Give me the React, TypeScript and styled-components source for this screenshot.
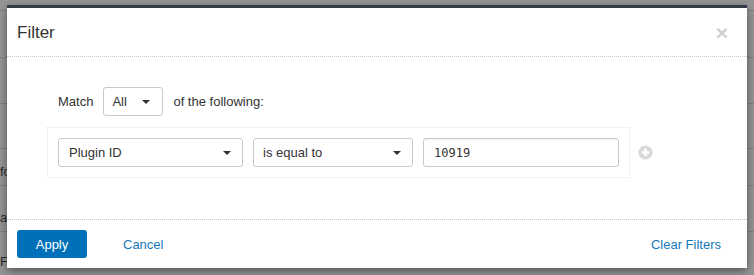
import styled, { createGlobalStyle } from "styled-components";

const GlobalStyle = createGlobalStyle`
  html, body {
    margin: 0;
    padding: 0;
  }
  body {
    font-family: "Liberation Sans", Arial, sans-serif;
    font-size: 13px;
    color: #333;
  }
`;

const Page = styled.div`
  position: relative;
  width: 754px;
  height: 275px;
  overflow: hidden;
  background: #969696;
`;

const BackTable = styled.div`
  display: flex;
  flex-direction: column;
`;

const BackRow = styled.div<{ $h: number; $pad: number }>`
  box-sizing: border-box;
  height: ${(p) => p.$h}px;
  border-bottom: 1px solid #818181;
  padding-top: ${(p) => p.$pad}px;
  font-size: 13px;
  color: #2a2a2a;
  white-space: nowrap;
`;

const Modal = styled.div`
  position: absolute;
  left: 7px;
  top: 5px;
  width: 740px;
  height: 263px;
  box-sizing: border-box;
  background: #fff;
  border-top: 3px solid #303c48;
  box-shadow: 0 3px 9px rgba(0, 0, 0, 0.45);
  display: flex;
  flex-direction: column;
`;

const Header = styled.div`
  box-sizing: border-box;
  height: 49px;
  border-bottom: 1px dotted #c8c8c8;
  display: flex;
  align-items: center;
  justify-content: space-between;
  padding: 0 19px 0 10px;
`;

const Title = styled.h4`
  margin: 0;
  font-size: 17px;
  font-weight: normal;
  color: #333;
  line-height: 1;
  padding-top: 1px;
`;

const Close = styled.span`
  font-size: 21px;
  font-weight: bold;
  line-height: 1;
  color: #cfcfcf;
  cursor: pointer;
`;

const Body = styled.div`
  flex: 1;
  box-sizing: border-box;
  padding: 30px 0 0 40px;
`;

const MatchRow = styled.div`
  display: flex;
  align-items: center;
  gap: 10px;
  height: 29px;
  margin-left: 11px;
`;

const Select = styled.div<{ $w: number; $padLeft?: number; $padRight?: number }>`
  box-sizing: border-box;
  width: ${(p) => p.$w}px;
  height: 29px;
  border: 1px solid #cacaca;
  border-radius: 3px;
  background: #fff;
  display: flex;
  align-items: center;
  justify-content: space-between;
  padding: 0 ${(p) => p.$padRight ?? 11}px 0 ${(p) => p.$padLeft ?? 9}px;
  color: #333;
`;

const Caret = styled.span`
  width: 0;
  height: 0;
  border-left: 4px solid transparent;
  border-right: 4px solid transparent;
  border-top: 4px solid #333;
  margin-top: 1px;
`;

const ConditionRow = styled.div`
  display: flex;
  align-items: center;
  gap: 8px;
  margin-top: 11px;
`;

const ConditionBox = styled.div`
  box-sizing: border-box;
  width: 583px;
  border: 1px dotted #e2e2e2;
  padding: 10px;
  display: flex;
  gap: 10px;
`;

const ValueInput = styled.input`
  box-sizing: border-box;
  width: 196px;
  height: 29px;
  border: 1px solid #cacaca;
  border-radius: 3px;
  padding: 0 10px;
  font-family: "DejaVu Sans Mono", "Liberation Mono", monospace;
  font-size: 12px;
  color: #333;
  box-shadow: inset 0 1px 1px rgba(0, 0, 0, 0.06);
  outline: none;
`;

const PlusIcon = styled.svg`
  width: 15px;
  height: 15px;
  display: block;
`;

const Footer = styled.div`
  box-sizing: border-box;
  height: 49px;
  border-top: 1px dotted #c8c8c8;
  display: flex;
  align-items: center;
  padding: 0 26px 0 10px;
`;

const PrimaryButton = styled.button`
  box-sizing: border-box;
  width: 70px;
  height: 28px;
  border: 0;
  border-radius: 3px;
  background: #0070ba;
  color: #fff;
  font-family: inherit;
  font-size: 13px;
  cursor: pointer;
`;

const LinkButton = styled.a<{ $push?: boolean }>`
  color: #1677b9;
  font-size: 13px;
  text-decoration: none;
  cursor: pointer;
  margin-left: ${(p) => (p.$push ? "auto" : "36px")};
`;

// rows of the page behind the dialog, only their left edges peek out
const backRows = [
  { h: 11, pad: 0, text: "" },
  { h: 47, pad: 0, text: "" },
  { h: 46, pad: 0, text: "" },
  { h: 45, pad: 0, text: "" },
  { h: 37, pad: 15, text: "fo" },
  { h: 46, pad: 24, text: "ac" },
  { h: 44, pad: 22, text: "F" },
];

export default function App() {
  return (
    <>
      <GlobalStyle />
      <Page>
        <BackTable>
          {backRows.map((r, i) => (
            <BackRow key={i} $h={r.h} $pad={r.pad}>
              {r.text}
            </BackRow>
          ))}
        </BackTable>

        <Modal>
          <Header>
            <Title>Filter</Title>
            <Close>×</Close>
          </Header>

          <Body>
            <MatchRow>
              <span>Match</span>
              <Select $w={60} $padLeft={8} $padRight={12}>
                <span>All</span>
                <Caret />
              </Select>
              <span>of the following:</span>
            </MatchRow>

            <ConditionRow>
              <ConditionBox>
                <Select $w={185} $padLeft={10} $padRight={11}>
                  <span>Plugin ID</span>
                  <Caret />
                </Select>
                <Select $w={160} $padLeft={9} $padRight={11}>
                  <span>is equal to</span>
                  <Caret />
                </Select>
                <ValueInput defaultValue="10919" />
              </ConditionBox>
              <PlusIcon viewBox="0 0 16 16">
                <circle cx="8" cy="8" r="7.5" fill="#d9d9d9" />
                <rect x="4" y="6.6" width="8" height="2.8" fill="#fff" />
                <rect x="6.6" y="4" width="2.8" height="8" fill="#fff" />
              </PlusIcon>
            </ConditionRow>
          </Body>

          <Footer>
            <PrimaryButton>Apply</PrimaryButton>
            <LinkButton>Cancel</LinkButton>
            <LinkButton $push>Clear Filters</LinkButton>
          </Footer>
        </Modal>
      </Page>
    </>
  );
}
